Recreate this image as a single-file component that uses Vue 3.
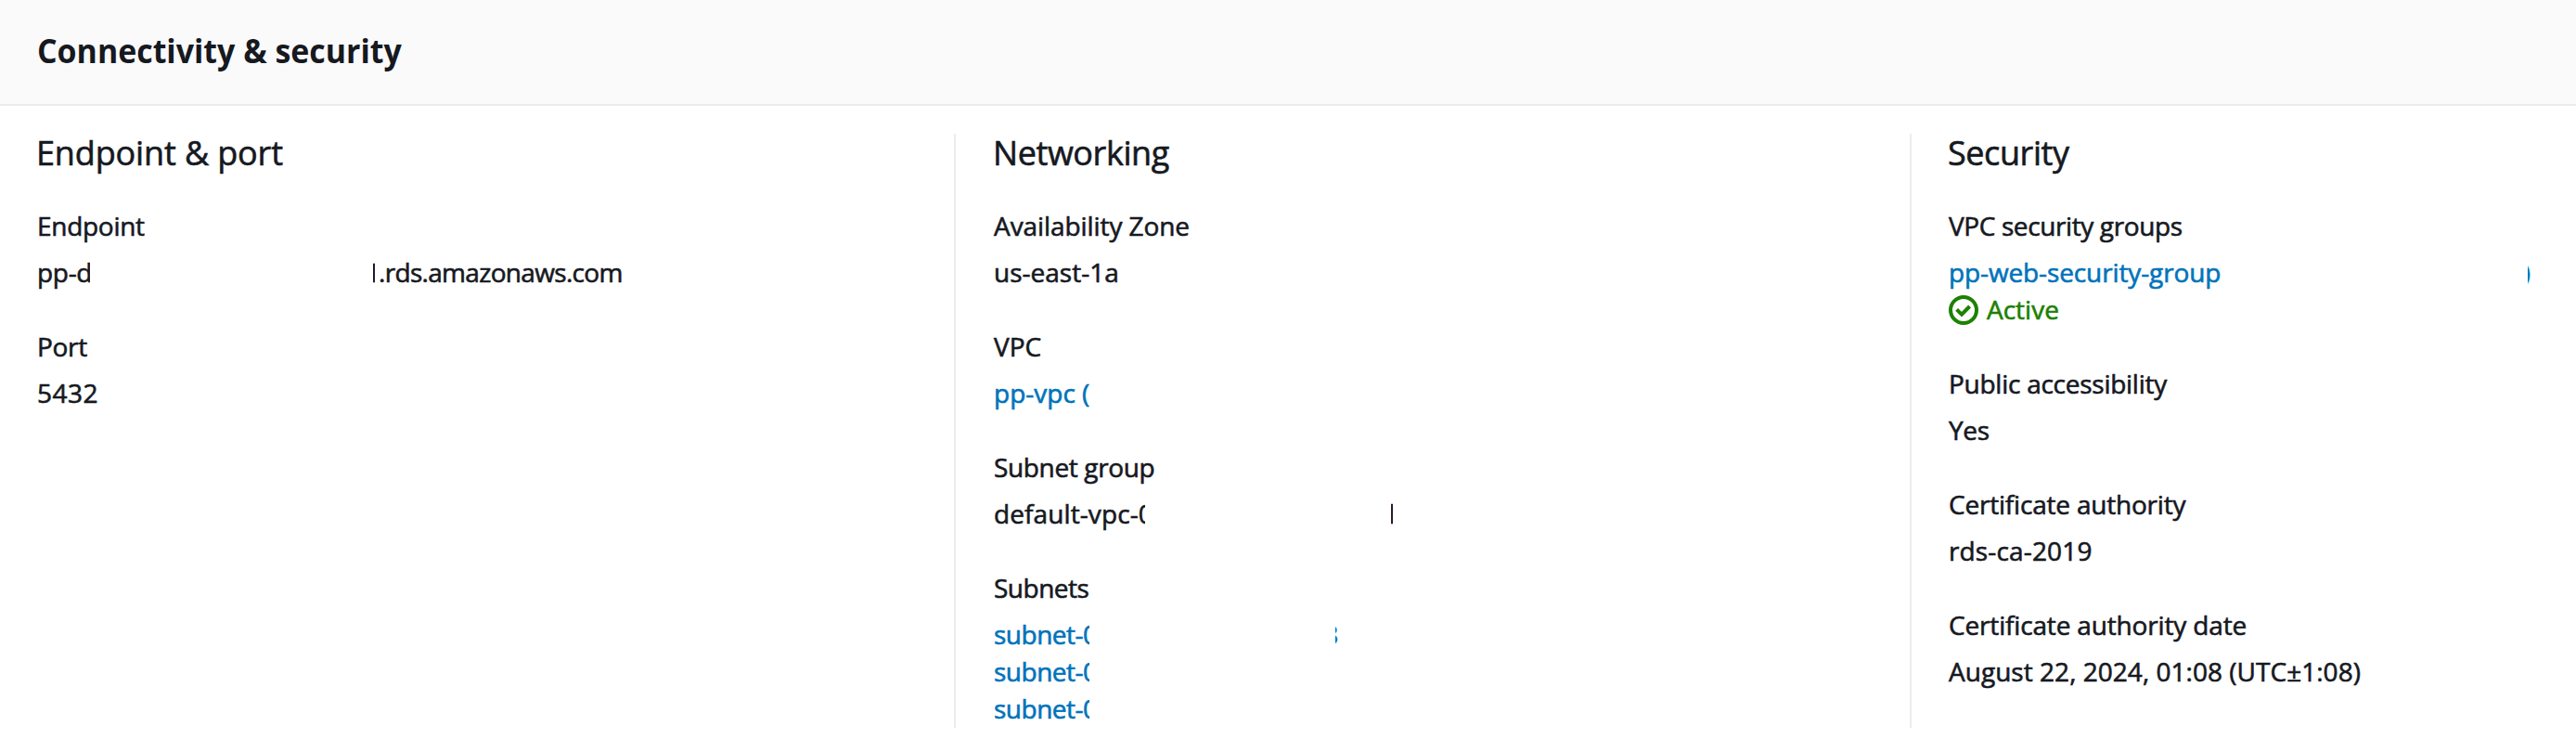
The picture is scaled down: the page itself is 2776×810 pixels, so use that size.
<script setup>
// Each value is a list of lines; each line is a list of text fragments.
// track: letter spacing, w: visible width, gap: space before, shift: hidden leading part
const columns = [
  {
    title: 'Endpoint & port', track: -0.14,
    fields: [
      { label: 'Endpoint', track: -0.29, lines: [{ parts: [
        { t: 'pp-d', w: 57, track: -0.3 },
        { t: 'I', gap: 305, w: 2, shift: -3 },
        { t: '.rds.amazonaws.com', gap: 4, track: -0.68 },
      ] }] },
      { label: 'Port', track: -0.3, lines: [{ parts: [{ t: '5432', track: 0.47 }] }] },
    ],
  },
  {
    title: 'Networking', track: -0.42,
    fields: [
      { label: 'Availability Zone', track: -0.08, lines: [{ parts: [{ t: 'us-east-1a', track: 0 }] }] },
      { label: 'VPC', track: 0, lines: [{ link: true, parts: [{ t: 'pp-vpc (', track: 0, w: 103 }] }] },
      { label: 'Subnet group', track: -0.36, lines: [{ parts: [
        { t: 'default-vpc-0', track: 0.1, w: 163 },
        { t: 'l', gap: 265, w: 2, shift: -2.5 },
      ] }] },
      { label: 'Subnets', track: -0.5, lines: [
        { link: true, parts: [{ t: 'subnet-0', track: -0.5, w: 103 }, { t: '8', gap: 265, w: 6, shift: -12.8 }] },
        { link: true, parts: [{ t: 'subnet-0', track: -0.5, w: 103 }] },
        { link: true, parts: [{ t: 'subnet-0', track: -0.5, w: 103 }] },
      ] },
    ],
  },
  {
    title: 'Security', track: -0.42,
    fields: [
      { label: 'VPC security groups', track: -0.39, lines: [
        { link: true, parts: [{ t: 'pp-web-security-group', w: 300, track: -0.12 }, { t: ')', gap: 324, w: 6, shift: -5.2 }] },
        { status: true, parts: [{ t: 'Active', track: 0 }] },
      ] },
      { label: 'Public accessibility', track: -0.26, lines: [{ parts: [{ t: 'Yes', track: -0.3 }] }] },
      { label: 'Certificate authority', track: -0.2, lines: [{ parts: [{ t: 'rds-ca-2019', track: 0.15 }] }] },
      { label: 'Certificate authority date', track: -0.16, lines: [{ parts: [{ t: 'August 22, 2024, 01:08 (UTC±1:08)', track: 0.03 }] }] },
    ],
  },
]

const px = (n) => (n === undefined ? undefined : n + 'px')
const partStyle = (p) => ({
  letterSpacing: px(p.track),
  width: px(p.w),
  marginLeft: px(p.gap),
  textIndent: px(p.shift),
})
</script>

<template>
  <section class="panel">
    <header class="panel-header"><h1>Connectivity &amp; security</h1></header>
    <div class="columns">
      <div v-for="c in columns" :key="c.title" class="column">
        <h2 :style="{ letterSpacing: px(c.track) }">{{ c.title }}</h2>
        <dl v-for="f in c.fields" :key="f.label">
          <dt :style="{ letterSpacing: px(f.track) }">{{ f.label }}</dt>
          <dd v-for="(l, i) in f.lines" :key="i" :class="{ link: l.link, status: l.status }">
            <svg v-if="l.status" class="icon" viewBox="0 0 32 32" fill="none" stroke="currentColor" stroke-width="4">
              <circle cx="16" cy="16" r="14" />
              <path d="M8.6 15.4 14 20.6 22.6 12" />
            </svg>
            <span
              v-for="(p, j) in l.parts" :key="j" class="part"
              :class="{ clip: p.w }" :style="partStyle(p)"
            >{{ p.t }}</span>
          </dd>
        </dl>
      </div>
    </div>
  </section>
</template>

<style>
body { background: #fff; }
</style>

<style scoped>
.panel {
  height: 810px;
  overflow: hidden;
  color: #16191f;
  font: 400 28px/40px "Open Sans", "Noto Sans", sans-serif;
  -webkit-text-stroke: 0.6px currentColor;
}
.panel-header {
  box-sizing: border-box;
  height: 114px;
  padding: 35px 40px 0 40px;
  background: #fafafa;
  border-bottom: 2px solid #eaeded;
}
h1 {
  margin: 0;
  font-size: 36px;
  line-height: 40px;
  font-weight: 700;
  transform: scaleX(0.942);
  transform-origin: left;
  -webkit-text-stroke: 0;
}
.columns {
  display: grid;
  grid-template-columns: 1028px 1030px 1fr;
  padding-top: 30px;
}
.column {
  box-sizing: border-box;
  height: 640px;
  padding: 1px 0 0 40px;
  white-space: nowrap;
}
.column:nth-child(2) { padding-left: 41px; }
.column + .column { border-left: 2px solid #eaeded; }
.column:nth-child(3) { padding-left: 40px; }
h2 {
  margin: 0 0 38px -1px;
  font-size: 36px;
  line-height: 40px;
  font-weight: 400;
}
dl { margin: 0 0 40px; }
dt { height: 40px; margin-bottom: 10px; }
dd { display: flex; height: 40px; margin: 0; }
.part { flex: none; white-space: pre; }
.clip { overflow: hidden; }
.link { color: #0073bb; }
.status { color: #1d8102; gap: 9px; }
.icon { width: 32px; height: 32px; margin-top: 5px; -webkit-text-stroke: 0; }
</style>
